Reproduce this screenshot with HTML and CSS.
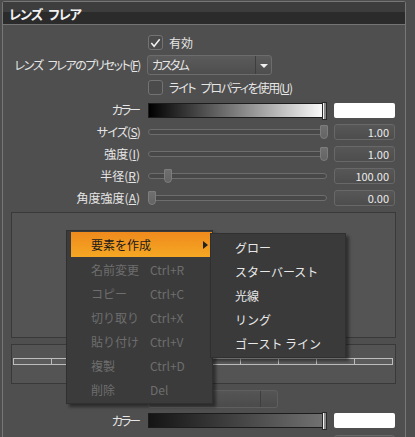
FILE: index.html
```html
<!DOCTYPE html>
<html lang="ja">
<head>
<meta charset="utf-8">
<link rel="stylesheet" href="styles.css">
</head>
<body>
<div class="panel">
  <div class="title">レンズ フレア</div>
  <div class="form">
    <label class="ctl wide check"><span class="cbox"><svg width="14" height="14" viewBox="0 0 14 14"><polyline points="2.5,7 5.5,10.5 11.5,3" fill="none" stroke="#f2f2f2" stroke-width="1.6"/></svg></span><span>有効</span></label>

    <div class="lbl kana-tight">レンズ フレアのプリセット(<u>F</u>)</div>
    <div class="ctl wide"><div class="select"><span class="sel-text">カスタム</span><span class="sel-btn"><span class="tri"></span></span></div></div>

    <label class="ctl wide check"><span class="cbox"></span><span class="kana-tight2">ライト プロパティを使用(<u>U</u>)</span></label>

    <div class="lbl kana-narrow">カラー</div>
    <div class="ctl"><div class="grad"><span class="grad-handle"></span></div></div>
    <div class="val"><div class="swatch"></div></div>

    <div class="lbl kana-mid">サイズ(<u>S</u>)</div>
    <div class="ctl"><div class="slider"><span class="groove"></span><span class="handle" style="left:172px"></span></div></div>
    <div class="val"><div class="num">1.00</div></div>

    <div class="lbl">強度(<u>I</u>)</div>
    <div class="ctl"><div class="slider"><span class="groove"></span><span class="handle" style="left:172px"></span></div></div>
    <div class="val"><div class="num">1.00</div></div>

    <div class="lbl">半径(<u>R</u>)</div>
    <div class="ctl"><div class="slider"><span class="groove"></span><span class="handle" style="left:16px"></span></div></div>
    <div class="val"><div class="num">100.00</div></div>

    <div class="lbl">角度強度(<u>A</u>)</div>
    <div class="ctl"><div class="slider"><span class="groove"></span><span class="handle" style="left:0px"></span></div></div>
    <div class="val"><div class="num">0.00</div></div>
  </div>

  <div class="group g1"></div>
  <div class="group g2">
    <div class="ruler"><span></span><span></span><span></span><span></span><span></span><span></span><span></span><span></span><span></span><span></span></div>
  </div>

  <div class="form form2">
    <div class="ctl wide"><div class="select small"><span class="sel-text"></span><span class="sel-btn"></span></div></div>

    <div class="lbl kana-narrow">カラー</div>
    <div class="ctl"><div class="grad dark"><span class="grad-handle"></span></div></div>
    <div class="val"><div class="swatch"></div></div>

    <div class="lbl"></div>
    <div class="ctl"><div class="slider"><span class="groove"></span></div></div>
    <div class="val"><div class="num"></div></div>
  </div>
</div>

<div class="menu main-menu">
  <div class="item active"><span class="name">要素を作成</span><span class="sc"></span><span class="sub-arrow"></span></div>
  <div class="item disabled"><span class="name">名前変更</span><span class="sc">Ctrl+R</span></div>
  <div class="item disabled"><span class="name">コピー</span><span class="sc">Ctrl+C</span></div>
  <div class="item disabled"><span class="name">切り取り</span><span class="sc">Ctrl+X</span></div>
  <div class="item disabled"><span class="name">貼り付け</span><span class="sc">Ctrl+V</span></div>
  <div class="item disabled"><span class="name">複製</span><span class="sc">Ctrl+D</span></div>
  <div class="item disabled"><span class="name">削除</span><span class="sc">Del</span></div>
</div>

<div class="menu sub-menu">
  <div class="sitem">グロー</div>
  <div class="sitem">スターバースト</div>
  <div class="sitem">光線</div>
  <div class="sitem">リング</div>
  <div class="sitem">ゴースト ライン</div>
</div>
</body>
</html>
```
FILE: styles.css
```css
html, body {
  margin: 0;
  padding: 0;
}
body {
  width: 415px;
  height: 437px;
  overflow: hidden;
  position: relative;
  background: #4e4e4e;
  font-family: "Noto Sans CJK JP", "Noto Sans", sans-serif;
  font-size: 12px;
  color: #e6e6e6;
}
u {
  text-decoration: underline;
  text-underline-offset: 1px;
}
.panel {
  box-sizing: border-box;
  margin: 1px 0 0 2px;
  width: 404px;
  height: 436px;
  border: 1px solid #777;
  border-bottom: none;
  border-radius: 3px 3px 0 0;
  background: #4f4f4f;
}
.title {
  height: 22px;
  line-height: 23px;
  padding-left: 6px;
  background: linear-gradient(#3d3d3d 0, #3d3d3d 10px, #2b2b2b 10px, #2b2b2b 100%);
  border-bottom: 1px solid #747474;
  font-weight: bold;
  font-size: 13px;
  color: #f2f2f2;
  font-feature-settings: "palt";
  letter-spacing: -1px;
  word-spacing: 4px;
}
.form {
  display: grid;
  grid-template-columns: 137px 8px 179px 7px 61px;
  grid-template-rows: 23px 22px 23px 22px 21px 23px 22px 21px;
  padding-top: 6px;
  align-items: center;
}
.lbl {
  grid-column: 1;
  text-align: right;
  white-space: nowrap;
  font-feature-settings: "palt";
  line-height: 14px;
}
.kana-tight {
  letter-spacing: -1.4px;
  word-spacing: 4px;
}
.kana-tight2 {
  letter-spacing: -1.3px;
  word-spacing: 4px;
}
.kana-mid {
  letter-spacing: -0.8px;
}
.kana-narrow {
  letter-spacing: -2px;
  padding-right: 1px;
}
.ctl {
  grid-column: 3;
  display: flex;
  align-items: center;
}
.ctl.wide {
  grid-column: 3 / 6;
}
.val {
  grid-column: 5;
  display: flex;
  align-items: center;
}
.check {
  gap: 6px;
  white-space: nowrap;
  font-feature-settings: "palt";
}
.cbox {
  box-sizing: border-box;
  width: 15px;
  height: 15px;
  border: 1px solid #737373;
  border-radius: 3px;
  background: #4b4b4b;
  display: flex;
  align-items: center;
  justify-content: center;
}
.cbox svg {
  display: block;
}
.select {
  box-sizing: border-box;
  width: 125px;
  height: 20px;
  margin-left: -1px;
  border: 1px solid #6c6c6c;
  border-radius: 3px;
  background: linear-gradient(#5b5b5b, #4e4e4e);
  display: flex;
  align-items: center;
}
.sel-text {
  flex: 1;
  padding-left: 4px;
  font-feature-settings: "palt";
  letter-spacing: -2px;
  line-height: 18px;
}
.sel-btn {
  width: 15px;
  height: 100%;
  border-left: 1px solid #3e3e3e;
  display: flex;
  align-items: center;
  justify-content: center;
}
.tri {
  width: 0;
  height: 0;
  border-left: 4px solid transparent;
  border-right: 4px solid transparent;
  border-top: 4px solid #f0f0f0;
  margin-top: 1px;
}
.select.small {
  width: 130px;
  height: 18px;
  margin-left: 0;
  border-color: #5f5f5f;
  background: linear-gradient(#555, #4b4b4b);
}
.select.small .sel-btn {
  width: 16px;
}
.grad {
  position: relative;
  box-sizing: border-box;
  width: 179px;
  height: 15px;
  border: 1px solid #1c1c1c;
  background: linear-gradient(to right, #000, #fff);
}
.grad.dark {
  background: linear-gradient(to right, #141414, #727272);
}
.grad-handle {
  position: absolute;
  right: -1px;
  top: -2px;
  box-sizing: border-box;
  width: 5px;
  height: 18px;
  border: 1px solid #2a2a2a;
  background: #8a8a8a;
  box-shadow: inset 1px 0 0 #f4f4f4;
}
.swatch {
  width: 61px;
  height: 15px;
  border-radius: 2px;
  background: #fff;
}
.slider {
  position: relative;
  width: 180px;
  height: 14px;
}
.groove {
  position: absolute;
  left: 0;
  right: 0;
  top: 4px;
  height: 6px;
  box-sizing: border-box;
  border: 1px solid #6d6d6d;
  border-radius: 3px;
  background: #484848;
}
.handle {
  position: absolute;
  top: 0;
  box-sizing: border-box;
  width: 8px;
  height: 14px;
  border: 1px solid #7d7d7d;
  border-radius: 1px 1px 4px 4px;
  background: linear-gradient(#6f6f6f, #646464);
}
.num {
  box-sizing: border-box;
  width: 61px;
  height: 16px;
  border: 1px solid #686868;
  border-radius: 3px;
  background: linear-gradient(#575757, #4d4d4d);
  text-align: right;
  padding-right: 5px;
  font-size: 11px;
  line-height: 14px;
  color: #ececec;
}
.group {
  box-sizing: border-box;
  width: 385px;
  margin-left: 8px;
  border: 1px solid #393939;
  background: #545454;
}
.g1 {
  margin-top: 4px;
  height: 126px;
}
.g2 {
  margin-top: 6px;
  height: 40px;
  padding: 13px 0 0 1px;
}
.ruler {
  display: flex;
  width: 380px;
  height: 7px;
  box-sizing: border-box;
  border: 1px solid #bcbcbc;
  background: #5c5c5c;
}
.ruler span {
  flex: 1;
  border-left: 1px solid #bcbcbc;
}
.ruler span:first-child {
  border-left: none;
}
.form2 {
  grid-template-rows: 21px 23px 22px;
  padding-top: 4px;
}
.menu {
  position: absolute;
  box-sizing: border-box;
  background: #3b3b3b;
  border: 1px solid #303030;
  box-shadow: 3px 3px 3px rgba(0, 0, 0, 0.45);
}
.main-menu {
  left: 66px;
  top: 230px;
  width: 147px;
  height: 174px;
  padding: 1px 0 0 4px;
}
.item {
  position: relative;
  height: 24px;
  display: flex;
  align-items: center;
  padding-left: 20px;
  white-space: nowrap;
}
.item .name {
  width: 59px;
}
.item.active {
  background: linear-gradient(#ef8a1d, #f5a823);
  color: #1a1a1a;
  height: 25px;
}
.item.disabled {
  color: #6e6e6e;
}
.sub-arrow {
  position: absolute;
  right: 4px;
  top: 9px;
  width: 0;
  height: 0;
  border-top: 4px solid transparent;
  border-bottom: 4px solid transparent;
  border-left: 5px solid #222;
}
.sub-menu {
  left: 210px;
  top: 233px;
  width: 136px;
  height: 125px;
  padding-top: 2px;
  background: #3a3a3a;
}
.sitem {
  height: 24px;
  line-height: 24px;
  padding-left: 24px;
  color: #e8e8e8;
  white-space: nowrap;
}
```
